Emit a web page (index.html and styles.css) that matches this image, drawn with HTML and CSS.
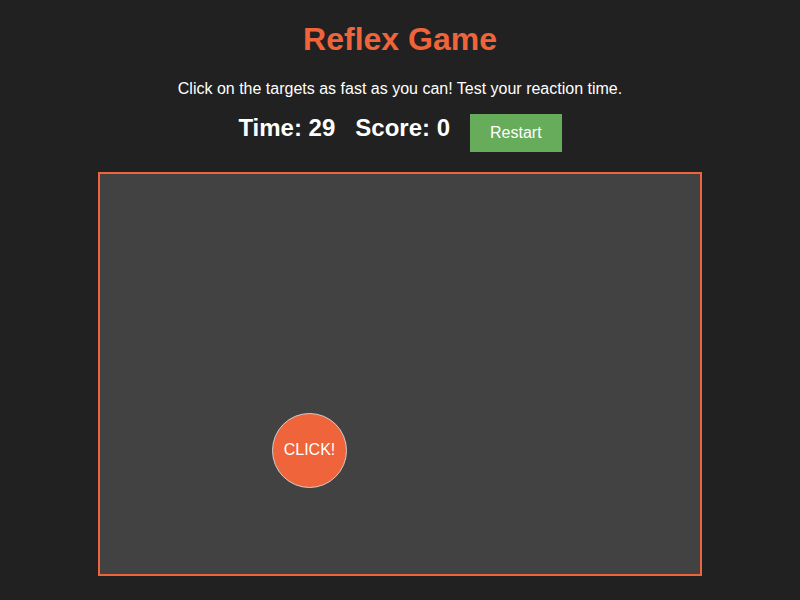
FILE: index.html
```html
<!DOCTYPE html>
<html>
<head>
<meta charset="utf-8">
<link rel="stylesheet" href="styles.css">
</head>
<body>
  <h1 class="title">Reflex Game</h1>
  <p class="intro">Click on the targets as fast as you can! Test your reaction time.</p>
  <div class="stats">
    <span class="stat">Time: 29</span>
    <span class="stat">Score: 0</span>
    <button class="restart">Restart</button>
  </div>
  <div class="arena">
    <div class="target" style="left: 172px; top: 239px;">CLICK!</div>
  </div>
</body>
</html>
```
FILE: styles.css
```css
html, body {
  background: #212121;
}
body {
  margin: 0;
  padding: 0 8px;
  font-family: "Liberation Sans", Arial, sans-serif;
  color: #ffffff;
  text-align: center;
}
.title {
  font-size: 32px;
  font-weight: bold;
  color: #ef643a;
  margin: 21.44px 0;
}
.intro {
  font-size: 16px;
  margin: 16px 0;
}
.stats {
  display: flex;
  justify-content: center;
  align-items: flex-start;
  gap: 20px;
  margin-top: 16px;
}
.stat {
  font-size: 24px;
  font-weight: bold;
}
.restart {
  font-family: "Liberation Sans", Arial, sans-serif;
  font-size: 16px;
  color: #ffffff;
  background: #67ac5b;
  border: none;
  padding: 10px 20px;
  line-height: 18px;
  cursor: pointer;
}
.arena {
  position: relative;
  width: 600px;
  height: 400px;
  margin: 20px auto 0;
  background: #424242;
  border: 2px solid #ef643a;
}
.target {
  position: absolute;
  width: 73px;
  height: 73px;
  border-radius: 50%;
  background: #ef643a;
  border: 1px solid #cfcfcf;
  display: flex;
  align-items: center;
  justify-content: center;
  font-size: 16px;
  color: #ffffff;
}
```
